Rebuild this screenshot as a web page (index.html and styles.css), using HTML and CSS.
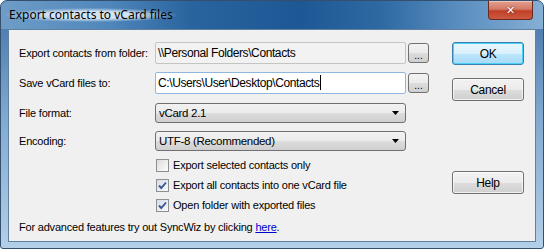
FILE: index.html
```html
<!DOCTYPE html>
<html lang="en">
<head>
    <meta charset="UTF-8">
    <title>Export contacts to vCard files</title>
    <link rel="stylesheet" href="styles.css">
</head>
<body>
    <div class="window">
        <div class="titlebar">
            <span class="title">Export contacts to vCard files</span>
            <button class="close-button">&#x2715;</button>
        </div>

        <div class="frame">
            <div class="client">
                <div class="form">
                    <div class="row">
                        <span class="label">Export contacts from folder:</span>
                        <div class="field readonly">\\Personal Folders\Contacts</div>
                        <button class="browse">...</button>
                    </div>
                    <div class="row row-save">
                        <span class="label">Save vCard files to:</span>
                        <div class="field focused">C:\Users\User\Desktop\Contacts<span class="caret"></span></div>
                        <button class="browse">...</button>
                    </div>
                    <div class="row row-format">
                        <span class="label">File format:</span>
                        <div class="combo">
                            <span>vCard 2.1</span>
                            <svg class="arrow" width="7" height="4" viewBox="0 0 7 4"><path d="M0 0H7L3.5 4Z" fill="#000"/></svg>
                        </div>
                    </div>
                    <div class="row row-encoding">
                        <span class="label">Encoding:</span>
                        <div class="combo">
                            <span>UTF-8 (Recommended)</span>
                            <svg class="arrow" width="7" height="4" viewBox="0 0 7 4"><path d="M0 0H7L3.5 4Z" fill="#000"/></svg>
                        </div>
                    </div>

                    <div class="options">
                        <label class="check">
                            <span class="box"></span>
                            Export selected contacts only
                        </label>
                        <label class="check">
                            <span class="box checked">
                                <svg width="11" height="11" viewBox="0 0 11 11"><path d="M2 5.5L4.3 8L9 2.5" fill="none" stroke="#3d5590" stroke-width="1.9"/></svg>
                            </span>
                            Export all contacts into one vCard file
                        </label>
                        <label class="check">
                            <span class="box checked">
                                <svg width="11" height="11" viewBox="0 0 11 11"><path d="M2 5.5L4.3 8L9 2.5" fill="none" stroke="#3d5590" stroke-width="1.9"/></svg>
                            </span>
                            Open folder with exported files
                        </label>
                    </div>

                    <p class="hint">For advanced features try out SyncWiz by clicking <a href="#">here</a>.</p>
                </div>

                <div class="actions">
                    <button class="button default">OK</button>
                    <button class="button cancel">Cancel</button>
                    <button class="button help">Help</button>
                </div>
            </div>
        </div>
    </div>
</body>
</html>
```

FILE: styles.css
```css
body {
    margin: 0;
    font-family: "Liberation Sans", Arial, sans-serif;
    font-size: 11px;
    letter-spacing: -0.2px;
    color: #000;
    background: #fff;
}

.window {
    width: 544px;
    height: 249px;
    box-sizing: border-box;
    border: 1px solid #34506e;
    border-radius: 7px 7px 3px 3px;
    overflow: hidden;
    display: flex;
    flex-direction: column;
    background: linear-gradient(180deg, #3f73a8 0%, #7ea7cf 45%, #b4cfe8 100%);
}

.titlebar {
    height: 28px;
    display: flex;
    align-items: flex-start;
    padding-left: 4px;
    background: linear-gradient(90deg, #6f9dc7 0%, #4f86bb 20%, #2a649e 35%, #1d5895 55%, #2e69a2 70%, #5b8fc0 85%, #86afd4 100%);
}

.title {
    font-family: "Noto Sans", "Liberation Sans", sans-serif;
    font-size: 12px;
    letter-spacing: 0;
    line-height: 14px;
    margin-top: 7px;
    padding: 0 4px;
    color: #000;
    background: radial-gradient(ellipse at center, rgba(235, 243, 250, 0.85) 35%, rgba(235, 243, 250, 0) 72%);
}

.close-button {
    margin-left: auto;
    margin-right: 10px;
    width: 45px;
    height: 19px;
    border: 1px solid #6a2a22;
    border-top: none;
    border-radius: 0 0 4px 4px;
    background: linear-gradient(180deg, #e3a090 0%, #d27a66 45%, #c03f28 55%, #cc5a40 100%);
    color: #fff;
    font-family: "DejaVu Sans", sans-serif;
    font-size: 11px;
    font-weight: bold;
    padding: 0;
    text-shadow: 0 0 2px #5a1a10;
    box-shadow: inset 0 1px 0 rgba(255, 255, 255, 0.4);
}

.frame {
    flex: 1;
    display: flex;
    padding: 0 7px 6px 7px;
}

.client {
    flex: 1;
    display: flex;
    align-items: flex-start;
    padding: 12px 0 0 10px;
    background-color: #f0f0f0;
    border: 1px solid #60809f;
}

.form {
    width: 410px;
    display: flex;
    flex-direction: column;
}

.row {
    display: flex;
    align-items: center;
}

.row-save {
    margin-top: 8px;
}

.row-format {
    margin-top: 9px;
}

.row-encoding {
    margin-top: 8px;
}

.label {
    width: 136px;
    flex-shrink: 0;
}

.field {
    width: 251px;
    height: 22px;
    box-sizing: border-box;
    border: 1px solid #b5b5b5;
    border-radius: 2px;
    padding: 0 2px;
    line-height: 20px;
    white-space: nowrap;
    font-size: 12px;
    letter-spacing: -0.4px;
}

.field.readonly {
    background-color: #f2f2f2;
    border-color: #c4c4c4;
}

.field.focused {
    background-color: #fff;
    border-color: #8fb8e0;
}

.caret {
    display: inline-block;
    width: 1px;
    height: 15px;
    margin-left: 1px;
    background: #000;
    vertical-align: -3px;
}

.browse {
    width: 21px;
    height: 20px;
    margin-left: 2px;
    padding: 0;
    border: 1px solid #707070;
    border-radius: 3px;
    background: linear-gradient(180deg, #f2f2f2 0%, #ebebeb 50%, #dddddd 51%, #cfcfcf 100%);
    font-family: "Liberation Sans", sans-serif;
    font-size: 10px;
    line-height: 24px;
    color: #000;
}

.combo {
    width: 251px;
    height: 20px;
    box-sizing: border-box;
    display: flex;
    align-items: center;
    padding: 0 6px 0 3px;
    border: 1px solid #707070;
    border-radius: 3px;
    background: linear-gradient(180deg, #f2f2f2 0%, #ebebeb 50%, #dddddd 51%, #cfcfcf 100%);
    font-size: 11.5px;
    letter-spacing: -0.3px;
}

.arrow {
    margin-left: auto;
}

.options {
    margin-top: 4px;
    padding-left: 137px;
    display: flex;
    flex-direction: column;
}

.check {
    height: 20px;
    display: flex;
    align-items: center;
    gap: 4px;
    font-size: 11px;
    letter-spacing: -0.2px;
}

.box {
    width: 13px;
    height: 13px;
    box-sizing: border-box;
    border: 1px solid #8e8f8f;
    background: linear-gradient(135deg, #dcdcdc 0%, #f3f3f3 70%, #fafafa 100%);
    display: flex;
    align-items: center;
    justify-content: center;
}

.box.checked {
    background: linear-gradient(135deg, #d6dde9 0%, #eef1f6 70%, #f7f8fa 100%);
}

.hint {
    margin: 5px 0 0;
    font-size: 11px;
    letter-spacing: -0.2px;
    line-height: 14px;
}

.hint a {
    color: #0000cc;
}

.actions {
    margin-left: 23px;
    width: 72px;
    display: flex;
    flex-direction: column;
}

.button {
    width: 72px;
    height: 23px;
    padding: 0;
    border: 1px solid #707070;
    border-radius: 3px;
    background: linear-gradient(180deg, #f2f2f2 0%, #ebebeb 50%, #dddddd 51%, #cfcfcf 100%);
    box-shadow: inset 0 0 0 1px rgba(255, 255, 255, 0.7);
    font-family: "Liberation Sans", sans-serif;
    font-size: 12px;
    letter-spacing: -0.3px;
    color: #000;
}

.button.default {
    border-color: #3c7fb1;
    background: linear-gradient(180deg, #eaf6fd 0%, #d9f0fc 50%, #bee6fd 51%, #a7d9f5 100%);
    box-shadow: inset 0 0 0 1px #48d1f9;
}

.button.cancel {
    margin-top: 13px;
}

.button.help {
    margin-top: 70px;
}
```
